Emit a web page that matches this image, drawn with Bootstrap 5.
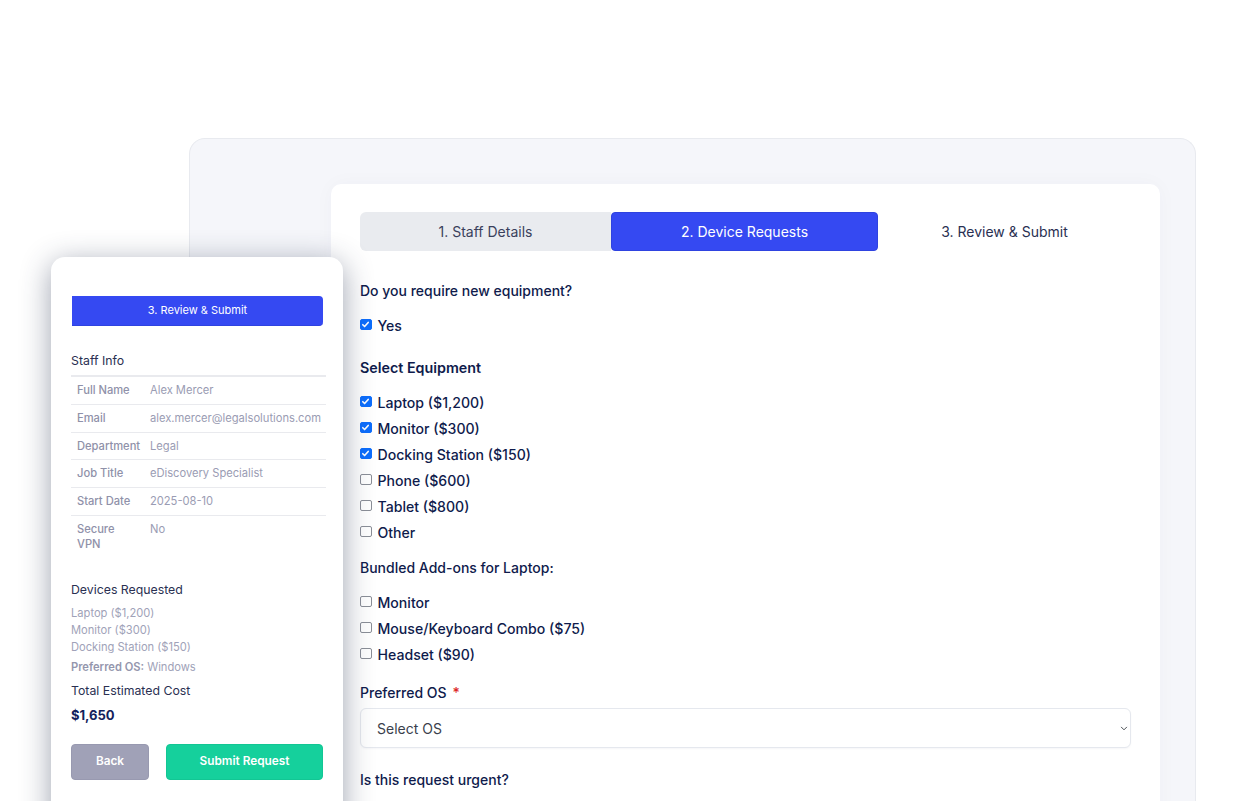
<!DOCTYPE html>
<html lang="en">
<head>
  <meta charset="UTF-8" />
  <title>Equipment Request</title>
  <link href="https://cdn.jsdelivr.net/npm/bootstrap@5.3.0/dist/css/bootstrap.min.css" rel="stylesheet" />
  <style>
    html, body { height: 801px; overflow: hidden; }
    body { font-family: Inter, "Liberation Sans", sans-serif; background: #fff; color: #0f1b4c; }
    .stage { position: relative; height: 801px; overflow: hidden; padding: 138px 50px 0 189px; }

    /* backdrop and main form */
    .back-panel { background: #f5f6fa; border: 1px solid #e8eaef; border-bottom: 0; border-radius: 16px 16px 0 0; height: 700px; padding: 45px 35px 0 141px; }
    .form-sheet { background: #fff; border-radius: 10px 10px 0 0; height: 660px; padding: 28px 29px 0; box-shadow: 0 0 20px rgba(30, 40, 90, .03); }

    .step-tabs { display: flex; height: 39px; margin-bottom: 31px; }
    .step-tab { display: flex; align-items: center; justify-content: center; font-size: 14px; color: #2a3052; }
    .step-tab.one { width: 251px; background: #e9ebef; border-radius: 6px 0 0 6px; color: #3a3f5c; }
    .step-tab.two { width: 267px; background: #3549f2; border: 1px solid #2f43e0; border-radius: 4px; color: #fff; }
    .step-tab.three { flex: 1; }

    .q-label { font-size: 14px; font-weight: 500; line-height: 18px; margin: 0; }
    .q-head { font-weight: 600; font-size: 14.3px; }
    .tick-list { margin: 0; padding: 0; }
    .tick-row { display: flex; align-items: center; gap: 6px; height: 26px; font-size: 14.1px; font-weight: 500; margin: 0; padding: 0; min-height: 0; }
    .tick-row .form-check-input { width: 11.5px; height: 11.5px; margin: -3px 0 0; float: none; border-radius: 2px; border-color: #8b8f98; }
    .tick-row .form-check-input:checked { border-color: #0d6efd; background-image: url("data:image/svg+xml,%3csvg xmlns='http://www.w3.org/2000/svg' viewBox='0 0 20 20'%3e%3cpath fill='none' stroke='%23fff' stroke-linecap='round' stroke-linejoin='round' stroke-width='3.6' d='m4 10.5 4 4 8-9'/%3e%3c/svg%3e"); }
    .req-star { color: #dc2626; margin-left: 2px; }
    .os-select { height: 40px; font-size: 14px; color: #3a3f4c; padding-left: 16px; border: 1px solid #e5e8ee; border-radius: 6px; background-size: 8px 7px; background-position: right 2px center; box-shadow: 0 1px 2px rgba(20, 30, 70, .04); margin-top: 6px; }

    /* phone overlay */
    .phone-card { position: absolute; left: 51px; top: 257px; width: 292px; height: 600px; background: #fff; border-radius: 14px; padding: 39px 20px 0; box-shadow: 0 6px 30px rgba(40, 50, 80, .45); }
    .phone-step { display: flex; align-items: center; justify-content: center; height: 30px; margin-left: 1px; width: 251px; background: #3549f2; border-bottom: 1px solid #2f43e0; border-radius: 0 4px 4px 0; color: #fff; font-size: 11px; }
    .sec-title { font-size: 12.3px; color: #2a3052; line-height: 16px; margin: 0; }
    .info-table { width: 255px; margin: 6px 0 0; font-size: 11.15px; color: #9a9cb3; border-top: 2px solid #e9eaee; }
    .info-table th, .info-table td { padding: 6px 0 6px 0; line-height: 14.75px; border-bottom: 1px solid #e9eaee; vertical-align: top; font-weight: 400; }
    .info-table th { font-weight: 500; width: 79px; padding-left: 6px; color: #8f91a9; }
    .info-table tr:last-child th, .info-table tr:last-child td { border-bottom: 0; }
    .device-lines { font-size: 11.15px; line-height: 17px; color: #a0a2b8; margin: 7px 0 0; }
    .os-line { font-size: 11.15px; line-height: 15px; color: #a0a2b8; margin: 4px 0 0; }
    .os-line strong { font-weight: 600; color: #9496ad; }
    .total-cost { font-size: 13px; font-weight: 700; line-height: 18px; color: #14215c; margin: 7px 0 0; }
    .phone-actions { display: flex; gap: 17px; margin-top: 20px; width: 252px; }
    .btn-back, .btn-submit { height: 36px; padding: 0; font-size: 11.8px; font-weight: 600; color: #fff; border-radius: 4px; display: flex; align-items: center; justify-content: center; }
    .btn-back { width: 78px; background: #a0a1b7; border: 1px solid #9899b0; }
    .btn-submit { width: 157px; background: #15d09c; border: 1px solid #12c694; }
  </style>
</head>
<body>
  <div class="stage">
    <div class="back-panel">
      <div class="form-sheet">
        <div class="step-tabs">
          <div class="step-tab one">1. Staff Details</div>
          <div class="step-tab two">2. Device Requests</div>
          <div class="step-tab three">3. Review &amp; Submit</div>
        </div>

        <p class="q-label">Do you require new equipment?</p>
        <div class="tick-list" style="margin-top:13px">
          <label class="form-check tick-row"><input class="form-check-input" type="checkbox" checked /> Yes</label>
        </div>

        <p class="q-label q-head" style="margin-top:20px">Select Equipment</p>
        <div class="tick-list" style="margin-top:13px">
          <label class="form-check tick-row"><input class="form-check-input" type="checkbox" checked /> Laptop ($1,200)</label>
          <label class="form-check tick-row"><input class="form-check-input" type="checkbox" checked /> Monitor ($300)</label>
          <label class="form-check tick-row"><input class="form-check-input" type="checkbox" checked /> Docking Station ($150)</label>
          <label class="form-check tick-row"><input class="form-check-input" type="checkbox" /> Phone ($600)</label>
          <label class="form-check tick-row"><input class="form-check-input" type="checkbox" /> Tablet ($800)</label>
          <label class="form-check tick-row"><input class="form-check-input" type="checkbox" /> Other</label>
        </div>

        <p class="q-label" style="margin-top:13px">Bundled Add-ons for Laptop:</p>
        <div class="tick-list" style="margin-top:13px">
          <label class="form-check tick-row"><input class="form-check-input" type="checkbox" /> Monitor</label>
          <label class="form-check tick-row"><input class="form-check-input" type="checkbox" /> Mouse/Keyboard Combo ($75)</label>
          <label class="form-check tick-row"><input class="form-check-input" type="checkbox" /> Headset ($90)</label>
        </div>

        <p class="q-label" style="margin-top:16px">Preferred OS <span class="req-star">*</span></p>
        <select class="form-select os-select"><option>Select OS</option></select>

        <p class="q-label" style="margin-top:23px">Is this request urgent?</p>
      </div>
    </div>

    <div class="phone-card">
      <div class="phone-step">3. Review &amp; Submit</div>

      <p class="sec-title" style="margin-top:27px">Staff Info</p>
      <table class="info-table">
        <tr><th>Full Name</th><td>Alex Mercer</td></tr>
        <tr><th>Email</th><td>alex.mercer@legalsolutions.com</td></tr>
        <tr><th>Department</th><td>Legal</td></tr>
        <tr><th>Job Title</th><td>eDiscovery Specialist</td></tr>
        <tr><th>Start Date</th><td>2025-08-10</td></tr>
        <tr><th>Secure<br />VPN</th><td>No</td></tr>
      </table>

      <p class="sec-title" style="margin-top:25px">Devices Requested</p>
      <div class="device-lines">Laptop ($1,200)<br />Monitor ($300)<br />Docking Station ($150)</div>
      <p class="os-line"><strong>Preferred OS:</strong> Windows</p>
      <p class="sec-title" style="margin-top:8px">Total Estimated Cost</p>
      <p class="total-cost">$1,650</p>

      <div class="phone-actions">
        <button class="btn btn-back" type="button">Back</button>
        <button class="btn btn-submit" type="button">Submit Request</button>
      </div>
    </div>
  </div>
  <script src="https://cdn.jsdelivr.net/npm/bootstrap@5.3.0/dist/js/bootstrap.bundle.min.js"></script>
</body>
</html>
